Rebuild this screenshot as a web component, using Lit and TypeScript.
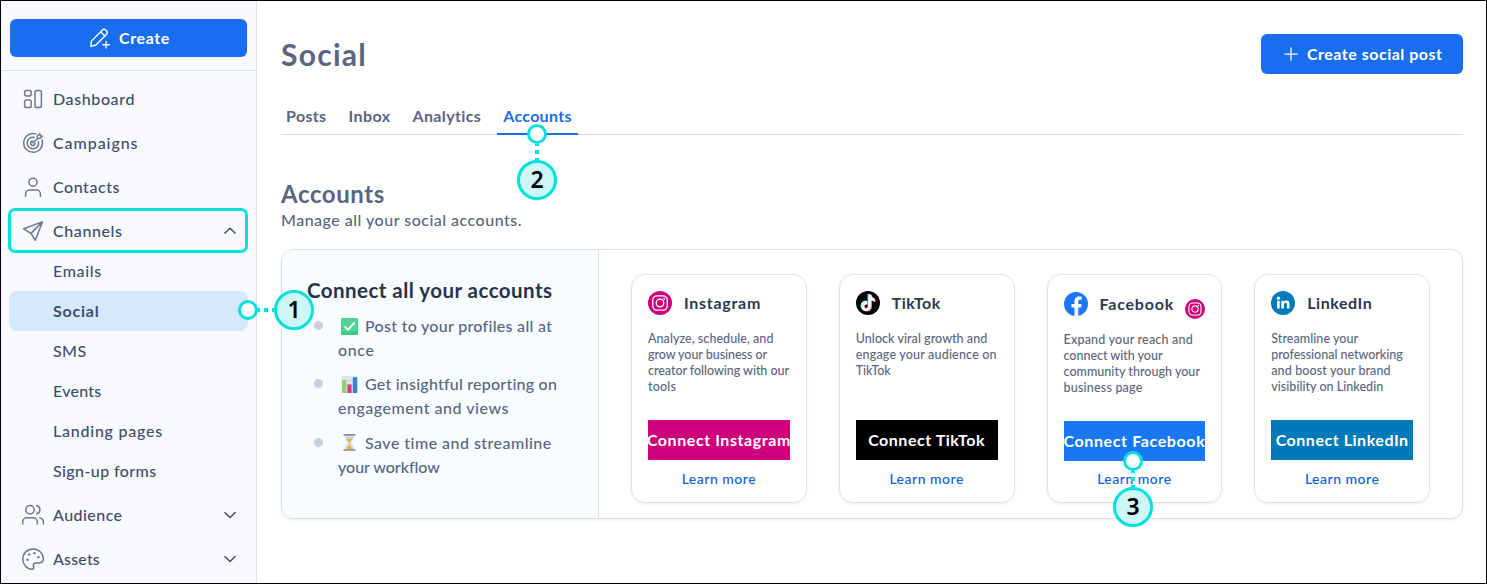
import { LitElement, html, css, svg, nothing } from "lit";
import { customElement } from "lit/decorators.js";

const t = (text: string, width: number) => html`<span class="t" data-w=${width}>${text}</span>`;

const icon = (size: number, body: unknown) => html`<svg width=${size} height=${size} viewBox="0 0 24 24" fill="none" stroke="currentColor" stroke-width="1.5" stroke-linecap="round" stroke-linejoin="round">${body}</svg>`;

const icons: Record<string, unknown> = {
  dashboard: svg`<rect x="3.600" y="3.500" width="6.600" height="5.400" rx="1.800"/><rect x="3.600" y="12.900" width="6.600" height="7.600" rx="1.800"/><rect x="14" y="3.500" width="6.400" height="17" rx="1.900"/>`,
  target: svg`<path d="M14.800 2.900A9.400 9.400 0 1 0 21.100 9.200"/><path d="M13.300 6.500A5.700 5.700 0 1 0 17.500 10.800"/><path d="M11.600 10A2.200 2.200 0 1 0 14 12.400M12 12l4.500-4.600M16.400 7.600V5L18.800 2.800l.5 1.900 1.900.5-2.300 2.400z"/>`,
  person: svg`<circle cx="12" cy="7.200" r="4"/><path d="M4.600 21.200V19a4 4 0 0 1 4-4h6.800a4 4 0 0 1 4 4v2.200"/>`,
  plane: svg`<path d="M2.600 9.800 21.400 2.900 14.300 21.300 10 14.400zM10 14.400 21.400 2.900M2.600 9.800l7.400 4.600"/>`,
  people: svg`<circle cx="9" cy="6.700" r="4.200"/><path d="M1.700 21v-2a4.200 4.200 0 0 1 4.200-4.200h6.200a4.200 4.200 0 0 1 4.200 4.200v2M15.700 2.500a4.300 4.300 0 0 1 0 8.300M18.700 15a4.200 4.200 0 0 1 3.700 4v2"/>`,
  palette: svg`<path d="M12 1.900C6.100 1.900 1.800 6.500 1.800 12S6.200 22.200 11 22.200c1.600 0 2.200-1 1.600-2.300-1.200-2.600.4-4 2.600-4h3.200c2.300 0 3.900-1.700 3.900-4.100C22.300 6.200 17.700 1.900 12 1.900z"/><g fill="currentColor" stroke-width="1"><circle cx="6.400" cy="12.800" r=".8"/><circle cx="8.200" cy="7.500" r=".8"/><circle cx="13.300" cy="6.300" r=".8"/><circle cx="17.300" cy="10.200" r=".8"/></g>`,
  pencil: svg`<path d="M2 21.200 2.600 15.400 14.400 3.500a2.900 2.900 0 0 1 4.100 0l.5.500a2.900 2.900 0 0 1 0 4.100L7.600 19.600 2 21.200zM12.600 5.300l4.700 4.600M18.600 15.800v7M15.100 19.300h7"/>`,
  plus: svg`<path d="M12 4.600v14.800M4.600 12h14.800"/>`,
};

const instagramGlyph = svg`<circle cx="12" cy="12" r="12" fill="#cd007b"/><g fill="none" stroke="#fff" stroke-width="1.3"><rect x="4.8" y="4.8" width="14.4" height="14.4" rx="4.2"/><circle cx="12" cy="12" r="3.8"/></g><circle cx="16.2" cy="7.8" r=".95" fill="#fff"/>`;

const note = "M12.300 3.600h3c.2 2.300 1.500 3.600 3.500 3.800v3c-1.400 0-2.500-.4-3.500-1.100v5.600c0 6.600-9.800 7-9.900.3 0-3.300 2.800-5.600 5.900-5v3.100c-3.800-.8-3.800 4.100-1 4.100 1.300 0 2-.9 2-2.200z";
const brands: Record<string, unknown> = {
  instagram: instagramGlyph,
  tiktok: svg`<circle cx="12" cy="12" r="12" fill="#000"/><path d=${note} fill="#25f4ee" transform="translate(-.8 -.5)"/><path d=${note} fill="#fe2c55" transform="translate(.8 .6)"/><path d=${note} fill="#fff"/>`,
  facebook: svg`<circle cx="12" cy="12" r="12" fill="#1977f3"/><path d="M10.500 24v-8.500H7.500V12h3V9.300c0-3 1.800-4.700 4.600-4.700 1.300 0 2.600.2 2.600.2v2.900h-1.500c-1.500 0-1.900.9-1.900 1.900V12h3.300l-.5 3.500h-2.800V24z" fill="#fff"/>`,
  linkedin: svg`<circle cx="12" cy="12" r="12" fill="#007ab9"/><g fill="#fff"><circle cx="7.400" cy="7.200" r="1.600"/><path d="M6.100 9.800h2.600v7.800H6.100zM10.300 9.800h2.500v1.100c.5-.8 1.400-1.300 2.600-1.300 2.400 0 3.100 1.500 3.100 3.800v4.200h-2.600v-3.800c0-1.100-.2-2-1.300-2s-1.700.8-1.700 2v3.800h-2.600z"/></g>`,
};

const nav = [
  { label: "Dashboard", w: 82, icon: "dashboard" },
  { label: "Campaigns", w: 85.5, icon: "target" },
  { label: "Contacts", w: 67, icon: "person" },
  {
    label: "Channels", w: 69.5, icon: "plane", arrow: "up",
    children: [["Emails", 49], ["Social", 46.5], ["SMS", 33.5], ["Events", 48.500], ["Landing pages", 110], ["Sign-up forms", 103.500]] as [string, number][],
  },
  { label: "Audience", w: 69.5, icon: "people", arrow: "down" },
  { label: "Assets", w: 47, icon: "palette", arrow: "down" },
];

const cards = [
  { id: "instagram", name: "Instagram", w: 77, bw: 144, lines: [["Analyze, schedule, and", 125.5], ["grow your business or", 119], ["creator following with our", 141], ["tools", 28]] },
  { id: "tiktok", name: "TikTok", w: 49, bw: 117, lines: [["Unlock viral growth and", 131.5], ["engage your audience on", 141], ["TikTok", 35]] },
  { id: "facebook", name: "Facebook", w: 74.5, bw: 142, extra: true, lines: [["Expand your reach and", 129.5], ["connect with your", 99], ["community through your", 136.5], ["business page", 79]] },
  { id: "linkedin", name: "LinkedIn", w: 65, bw: 133, lines: [["Streamline your", 87], ["professional networking", 131.5], ["and boost your brand", 119.5], ["visibility on Linkedin", 112]] },
] as { id: string; name: string; w: number; bw: number; extra?: boolean; lines: [string, number][] }[];

const emoji = {
  check: svg`<rect width="17" height="17" rx="1.5" fill="#3fc886"/><rect x=".6" y=".6" width="15.8" height="13" rx="1" fill="#52d494"/><path d="M3.6 8.4 7 11.6 13.6 4.6" fill="none" stroke="#fff" stroke-width="1.9"/>`,
  chart: svg`<rect x=".5" width="16" height="17" fill="#e5e0ec"/><path d="M1 4.5h15M1 9h15" stroke="#cfc8da" stroke-width=".8"/><rect x="1" y="4" width="4.2" height="13" fill="#8ed36b"/><rect x="6.4" y="8.5" width="4.2" height="8.5" fill="#dd3b78"/><rect x="11.8" y="1.2" width="4.4" height="15.8" fill="#3183d3"/>`,
  glass: svg`<path d="M4 1.5h9c0 4-1.600 5.200-3.300 7 1.700 1.800 3.300 3 3.300 7H4c0-4 1.600-5.200 3.300-7C5.600 6.700 4 5.500 4 1.500z" fill="#c5e2ef"/><path d="M5 4.500h7L9 8.200v3l3 4H5l3-4v-3z" fill="#f0b240"/><path d="M2.500 .9h12M2.500 16h12" stroke="#8f8790" stroke-width="1.700"/>`,
};

const perks: { e: keyof typeof emoji; a: [string, number]; b: [string, number] }[] = [
  { e: "check", a: ["Post to your profiles all at", 187], b: ["once", 36.5] },
  { e: "chart", a: ["Get insightful reporting on", 192], b: ["engagement and views", 171] },
  { e: "glass", a: ["Save time and streamline", 187], b: ["your workflow", 102] },
];

@customElement("app-root")
export class AppRoot extends LitElement {
  static styles = css`
    :host { display: block; font-family: Lato, "Open Sans", sans-serif; color: #5a6580; }
    * { box-sizing: border-box; }
    svg { display: block; flex: none; }
    .t { display: inline-block; white-space: pre; }
    .frame { position: relative; display: flex; width: 1487px; height: 584px; border: 1px solid #000; background: #fff; overflow: hidden; }
    .side { width: 256px; flex: none; background: #f8f9fd; border-right: 1px solid #d8e0ec; }
    .top { height: 70px; padding: 18px 9px 0; border-bottom: 1px solid #d3deea; }
    .create { display: flex; align-items: center; justify-content: center; gap: 8px; height: 38px; padding-left: 2px; border-radius: 6px; background: #186eee; color: #fff; font-weight: 700; font-size: 16px; }
    .nav { display: flex; flex-direction: column; gap: 4px; padding: 8px 8px 0; color: #414d68; font-size: 16px; font-weight: 500; }
    .row { display: flex; align-items: center; height: 40px; padding: 0 11px 0 12px; gap: 8px; }
    .row > svg { color: #6b7793; }
    .row .t, .sub .t, .create .t, .post .t, .name .t, .btn .t { flex: none; padding-bottom: 2px; }
    .arrow { margin-left: auto; }
    .row > .arrow { color: #414d68; }
    .sub { display: flex; align-items: center; height: 40px; padding-left: 44px; border-radius: 8px; }
    .on { background: #d5e9fd; font-weight: 700; }
    .main { flex: 1; padding: 33px 23px 0 24px; }
    .head { display: flex; justify-content: space-between; align-items: center; height: 40px; }
    h1, h2, h3, p, ul { margin: 0; padding: 0; font-weight: 700; }
    h1 { font-size: 30px; line-height: 40px; }
    .post { display: flex; align-items: center; gap: 6px; height: 40px; width: 202px; padding-left: 20px; border-radius: 6px; background: #186eee; color: #fff; font-size: 16px; font-weight: 700; }
    .tabs { display: flex; gap: 10px; height: 35px; margin-top: 26px; border-bottom: 1px solid #d5deea; font-size: 16px; font-weight: 700; line-height: 32px; }
    .tab { height: 35px; padding: 0 6px; }
    .tab:first-child { padding-left: 5px; }
    .active { color: #186eee; border-bottom: 2px solid #186eee; }
    h2 { margin-top: 44px; font-size: 24px; line-height: 30px; }
    p { margin-top: -1px; font-size: 16px; font-weight: 500; line-height: 24px; }
    .panel { display: flex; height: 270px; margin-top: 17px; border: 1px solid #d8e0ec; border-radius: 12px; box-shadow: 0 1px 3px rgba(90, 110, 150, .12); overflow: hidden; }
    .info { width: 317px; flex: none; padding: 27px 0 0 25px; background: #f6fcff; border-right: 1px solid #d8e0ec; }
    h3 { color: #28324a; font-size: 20.500px; line-height: 26px; }
    ul { list-style: none; display: flex; flex-direction: column; gap: 10.400px; padding-top: 11px; }
    li { display: flex; gap: 15px; padding-left: 7px; font-size: 16px; font-weight: 500; line-height: 24px; }
    .dot { width: 9px; height: 9px; margin-top: 7px; border-radius: 50%; background: #c8cfdf; }
    .line { display: flex; align-items: center; gap: 7px; padding-left: 3px; height: 24px; }
    .cards { flex: 1; display: grid; grid-template-columns: repeat(4, 1fr); gap: 32px; padding: 24px 32px 0; }
    .card { height: 229px; padding: 16px; border: 1px solid #dce2ee; border-radius: 14px; box-shadow: 0 1px 3px rgba(90, 110, 150, .12); min-width: 0; }
    .name { display: flex; align-items: center; height: 24px; gap: 12px; color: #2d3850; font-size: 16px; font-weight: 700; }
    .facebook { padding-top: 17px; }
    .extra { margin: 9px 0 0 -1px; }
    .desc { height: 80px; margin-top: 16px; font-size: 12.500px; font-weight: 500; line-height: 16px; }
    .desc .t { display: block; width: max-content; }
    .btn { display: flex; align-items: center; justify-content: center; height: 40px; margin-top: 9px; color: #fff; font-size: 16px; font-weight: 700; }
    .instagram .btn { background: #cd007b; }
    .tiktok .btn { background: #000; }
    .facebook .btn { background: #1977f3; }
    .linkedin .btn { background: #007ab9; }
    .learn { margin-top: 10px; text-align: center; color: #0b62e0; font-size: 14px; font-weight: 500; line-height: 18px; }
    .facebook .learn { margin-top: 9px; }
    .ring { position: absolute; left: 7px; top: 207px; width: 240px; height: 45px; border: 3px solid #00e1dc; border-radius: 7px; }
    .mark { position: absolute; display: flex; align-items: center; }
    .one { left: 237px; top: 289px; }
    .two { left: 516px; top: 123px; flex-direction: column; }
    .three { left: 1112px; top: 450px; flex-direction: column; }
    .knob { width: 20px; height: 20px; border: 3px solid #00e1dc; border-radius: 50%; background: #fff; }
    .num { display: grid; place-items: center; width: 40px; height: 40px; padding-bottom: 1px; border: 3px solid #00e1dc; border-radius: 50%; background: #ccf7f6; color: #000; font: 600 23px/1 "Noto Sans", "Open Sans", sans-serif; }
    .link { width: 16px; height: 4px; background: repeating-linear-gradient(90deg, #00e1dc 0 2px, transparent 2px 6px, #00e1dc 6px 10px, transparent 10px 14px); }
    .two .link, .three .link { width: 4px; height: 16px; background: repeating-linear-gradient(180deg, #00e1dc 0 2px, transparent 2px 6px, #00e1dc 6px 10px, transparent 10px 14px); }
  `;

  firstUpdated() {
    this.renderRoot.querySelectorAll<HTMLElement>("[data-w]").forEach((el) => {
      const gap = Number(el.dataset.w) - el.getBoundingClientRect().width;
      el.style.letterSpacing = `${(gap / (el.textContent ?? " ").length).toFixed(3)}px`;
    });
  }

  private mark(pos: string, n: number) {
    return html`<div class="mark ${pos}"><div class="knob"></div><div class="link"></div><div class="num">${n}</div></div>`;
  }

  private arrow(dir?: string) {
    if (!dir) return nothing;
    return html`<svg class="arrow" width="14" height="10" viewBox="0 0 14 10" fill="none" stroke="currentColor" stroke-width="1.5"><path d=${dir === "up" ? "M1.500 7.500 7 2.200l5.500 5.300" : "M1.500 2.200 7 7.500l5.500-5.300"}/></svg>`;
  }

  render() {
    return html`
      <div class="frame">
        <nav class="side">
          <div class="top"><div class="create">${icon(22, icons.pencil)}${t("Create", 51)}</div></div>
          <div class="nav">
            ${nav.map((n) => html`<div>
              <div class="row">${icon(24, icons[n.icon])}${t(n.label, n.w)}${this.arrow(n.arrow)}</div>
              ${n.children?.map(([l, w]) => html`<div class="sub ${l === "Social" ? "on" : ""}">${t(l, w)}</div>`) ?? nothing}
            </div>`)}
          </div>
        </nav>
        <main class="main">
          <div class="head"><h1>${t("Social", 86)}</h1><div class="post">${icon(20, icons.plus)}${t("Create social post", 135.5)}</div></div>
          <div class="tabs">
            <div class="tab">${t("Posts", 40.5)}</div><div class="tab">${t("Inbox", 42)}</div><div class="tab">${t("Analytics", 69)}</div><div class="tab active">${t("Accounts", 68.5)}</div>
          </div>
          <h2>${t("Accounts", 104)}</h2>
          <p>${t("Manage all your social accounts.", 241)}</p>
          <section class="panel">
            <div class="info">
              <h3>${t("Connect all your accounts", 245.5)}</h3>
              <ul>
                ${perks.map((p) => html`<li><span class="dot"></span><div>
                  <div class="line"><svg width="17" height="17" viewBox="0 0 17 17">${emoji[p.e]}</svg>${t(p.a[0], p.a[1])}</div>
                  ${t(p.b[0], p.b[1])}
                </div></li>`)}
              </ul>
            </div>
            <div class="cards">
              ${cards.map((c) => html`<article class="card ${c.id}">
                <div class="name"><svg width="24" height="24" viewBox="0 0 24 24">${brands[c.id]}</svg>${t(c.name, c.w)}${c.extra ? html`<svg class="extra" width="20" height="20" viewBox="0 0 24 24">${instagramGlyph}</svg>` : nothing}</div>
                <div class="desc">${c.lines.map(([l, w]) => t(l, w))}</div>
                <div class="btn">${t("Connect " + c.name, c.bw)}</div>
                <div class="learn">${t("Learn more", 74.5)}</div>
              </article>`)}
            </div>
          </section>
        </main>
        <div class="ring"></div>
        ${this.mark("one", 1)}${this.mark("two", 2)}${this.mark("three", 3)}
      </div>
    `;
  }
}
